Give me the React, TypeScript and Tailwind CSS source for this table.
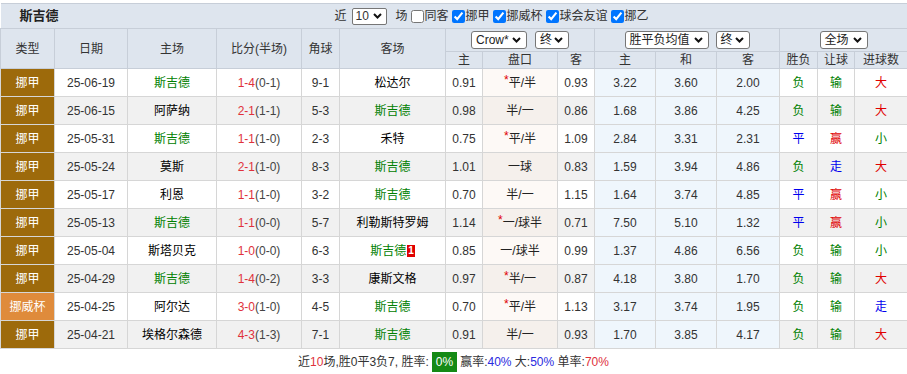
import React from 'react';

type Row = {
  type: string;
  date: string;
  home: string;
  score: string;
  half: string;
  corner: string;
  away: string;
  ah: [string, string, string];
  star?: boolean;
  eu: [string, string, string];
  wl: string;
  hc: string;
  ou: string;
  card?: string;
};

const TEAM = '斯吉德';

const rows: Row[] = [
  { type: '挪甲', date: '25-06-19', home: TEAM, score: '1-4', half: '(0-1)', corner: '9-1', away: '松达尔', ah: ['0.91', '平/半', '0.93'], star: true, eu: ['3.22', '3.60', '2.00'], wl: '负', hc: '输', ou: '大' },
  { type: '挪甲', date: '25-06-15', home: '阿萨纳', score: '2-1', half: '(1-1)', corner: '5-3', away: TEAM, ah: ['0.98', '半/一', '0.86'], eu: ['1.68', '3.86', '4.25'], wl: '负', hc: '输', ou: '大' },
  { type: '挪甲', date: '25-05-31', home: TEAM, score: '1-1', half: '(1-0)', corner: '2-3', away: '禾特', ah: ['0.75', '平/半', '1.09'], star: true, eu: ['2.84', '3.31', '2.31'], wl: '平', hc: '赢', ou: '小' },
  { type: '挪甲', date: '25-05-24', home: '莫斯', score: '2-1', half: '(1-0)', corner: '8-3', away: TEAM, ah: ['1.01', '一球', '0.83'], eu: ['1.59', '3.94', '4.86'], wl: '负', hc: '走', ou: '大' },
  { type: '挪甲', date: '25-05-17', home: '利恩', score: '1-1', half: '(1-0)', corner: '3-2', away: TEAM, ah: ['0.70', '半/一', '1.15'], eu: ['1.64', '3.74', '4.85'], wl: '平', hc: '赢', ou: '小' },
  { type: '挪甲', date: '25-05-13', home: TEAM, score: '1-1', half: '(0-0)', corner: '5-7', away: '利勒斯特罗姆', ah: ['1.14', '一/球半', '0.71'], star: true, eu: ['7.50', '5.10', '1.32'], wl: '平', hc: '赢', ou: '小' },
  { type: '挪甲', date: '25-05-04', home: '斯塔贝克', score: '1-0', half: '(0-0)', corner: '6-3', away: TEAM, card: '1', ah: ['0.85', '一/球半', '0.99'], eu: ['1.37', '4.86', '6.56'], wl: '负', hc: '输', ou: '小' },
  { type: '挪甲', date: '25-04-29', home: TEAM, score: '1-4', half: '(0-2)', corner: '3-3', away: '康斯文格', ah: ['0.97', '半/一', '0.87'], star: true, eu: ['4.18', '3.80', '1.70'], wl: '负', hc: '输', ou: '大' },
  { type: '挪威杯', date: '25-04-25', home: '阿尔达', score: '3-0', half: '(1-0)', corner: '4-5', away: TEAM, ah: ['0.70', '平/半', '1.13'], star: true, eu: ['3.17', '3.74', '1.95'], wl: '负', hc: '输', ou: '走' },
  { type: '挪甲', date: '25-04-21', home: '埃格尔森德', score: '4-3', half: '(1-3)', corner: '7-1', away: TEAM, ah: ['0.91', '半/一', '0.93'], eu: ['1.70', '3.85', '4.17'], wl: '负', hc: '输', ou: '大' },
];

const resultColor: Record<string, string> = {
  负: 'text-[#008000]',
  输: 'text-[#008000]',
  小: 'text-[#008000]',
  平: 'text-[#0000ee]',
  走: 'text-[#0000ee]',
  赢: 'text-[#e00000]',
  大: 'text-[#e00000]',
};

const widths = [54, 73, 89, 85, 38, 106, 37, 75, 37, 61, 61, 63, 38, 37, 53];

function Check({ label, checked }: { label: string; checked?: boolean }) {
  return (
    <label className="flex items-center">
      <input type="checkbox" defaultChecked={checked} className="my-0 ml-[3px] mr-[1px] h-[13px] w-[13px]" />
      <span>{label}</span>
    </label>
  );
}

function Chevron() {
  return (
    <svg width="9" height="6" viewBox="0 0 9 6" className="shrink-0">
      <path d="M1 1l3.5 3.5L8 1" fill="none" stroke="#111" strokeWidth="2" />
    </svg>
  );
}

function Sel({ value, w }: { value: string; w: string }) {
  return (
    <div
      className={`${w} flex h-[18px] items-center justify-between rounded-[3px] border border-[#767676] bg-white pl-[4px] pr-[5px] text-[12px] leading-[16px] text-[#222]`}
    >
      <span>{value}</span>
      <Chevron />
    </div>
  );
}

export default function App() {
  const th = 'border border-[#c7ced8] font-normal text-[#333]';
  const td = 'border border-[#d6d6d6]';

  return (
    <div className="w-[907px] bg-white pt-[3px] text-[12px] text-[#333]" style={{ fontFamily: 'Arial, "Noto Sans CJK SC", sans-serif' }}>
      <table className="w-full table-fixed border-collapse border-t border-[#c7ced8]">
        <colgroup>
          {widths.map((w, i) => (
            <col key={i} style={{ width: w }} />
          ))}
        </colgroup>
        <thead className="bg-[#dee5ee]">
          <tr className="h-[25px]">
            <th colSpan={15} className="p-0 text-left font-normal">
              <div className="flex items-center pl-[19px]">
                <span className="text-[13px] font-bold text-[#222]">斯吉德</span>
                <div className="ml-[276px] flex items-center text-[12px] text-[#333]">
                  <span>近</span>
                  <div className="ml-[5px] mr-[9px] flex h-[17px] w-[35px] items-center justify-between rounded-[2px] border border-[#767676] bg-white pl-[3px] pr-[4px] text-[12px]">
                    <span>10</span>
                    <Chevron />
                  </div>
                  <span>场</span>
                  <Check label="同客" />
                  <Check label="挪甲" checked />
                  <Check label="挪威杯" checked />
                  <Check label="球会友谊" checked />
                  <Check label="挪乙" checked />
                </div>
              </div>
            </th>
          </tr>
          <tr className="h-[23px]">
            <th rowSpan={2} className={th}>类型</th>
            <th rowSpan={2} className={th}>日期</th>
            <th rowSpan={2} className={th}>主场</th>
            <th rowSpan={2} className={th}>比分(半场)</th>
            <th rowSpan={2} className={th}>角球</th>
            <th rowSpan={2} className={th}>客场</th>
            <th colSpan={3} className={th}>
              <div className="flex items-center justify-center gap-[8px]">
                <Sel value="Crow*" w="w-[56px]" />
                <Sel value="终" w="w-[34px]" />
              </div>
            </th>
            <th colSpan={3} className={th}>
              <div className="flex items-center justify-center gap-[7px]">
                <Sel value="胜平负均值" w="w-[84px]" />
                <Sel value="终" w="w-[34px]" />
              </div>
            </th>
            <th colSpan={3} className={th}>
              <div className="flex items-center justify-center">
                <Sel value="全场" w="w-[48px]" />
              </div>
            </th>
          </tr>
          <tr className="h-[17px] leading-[15px]">
            {['主', '盘口', '客', '主', '和', '客', '胜负', '让球', '进球数'].map((h, i) => (
              <th key={i} className={th}>{h}</th>
            ))}
          </tr>
        </thead>
        <tbody>
          {rows.map((r, i) => {
            const grey = i % 2 === 1;
            const rowBg = grey ? 'bg-[#f1f1f1]' : 'bg-white';
            const ahBg = grey ? 'bg-[#f5f0ec]' : 'bg-[#fdf9f6]';
            return (
              <tr key={r.date} className={`h-[28px] text-center ${rowBg}`}>
                <td className={`${td} text-white ${r.type === '挪威杯' ? 'bg-[#df8b3b]' : 'bg-[#9d6a0b]'}`}>{r.type}</td>
                <td className={td}>{r.date}</td>
                <td className={`${td} ${r.home === TEAM ? 'text-[#008000]' : 'text-black'}`}>{r.home}</td>
                <td className={td}>
                  <span className="text-[#e0313b]">{r.score}</span>
                  <span className="text-[#444]">{r.half}</span>
                </td>
                <td className={td}>{r.corner}</td>
                <td className={`${td} ${r.away === TEAM ? 'text-[#008000]' : 'text-black'}`}>
                  {r.away}
                  {r.card && (
                    <span className="ml-[1px] inline-block bg-[#e00000] px-[1px] align-[1px] text-[10px] font-bold leading-[12px] text-white">
                      {r.card}
                    </span>
                  )}
                </td>
                <td className={td}>{r.ah[0]}</td>
                <td className={`${td} ${ahBg} text-[#222]`}>
                  {r.star && <span className="relative top-[-3px] text-[#e00000]">*</span>}
                  {r.ah[1]}
                </td>
                <td className={td}>{r.ah[2]}</td>
                {r.eu.map((v, j) => (
                  <td key={j} className={`${td} bg-[#eff6fc]`}>{v}</td>
                ))}
                <td className={`${td} ${resultColor[r.wl]}`}>{r.wl}</td>
                <td className={`${td} ${resultColor[r.hc]}`}>{r.hc}</td>
                <td className={`${td} ${resultColor[r.ou]}`}>{r.ou}</td>
              </tr>
            );
          })}
        </tbody>
      </table>
      <div className="flex h-[25px] items-center justify-center text-[12px] text-[#333]">
        <span>
          近<span className="text-[#e0313b]">10</span>场,胜0平3负7, 胜率:
        </span>
        <span className="mx-[3px] bg-[#158a15] px-[4px] leading-[20px] text-white">0%</span>
        <span>
          赢率:<span className="text-[#2a2ae0]">40%</span> 大:<span className="text-[#2a2ae0]">50%</span> 单率:
          <span className="text-[#e0313b]">70%</span>
        </span>
      </div>
    </div>
  );
}
